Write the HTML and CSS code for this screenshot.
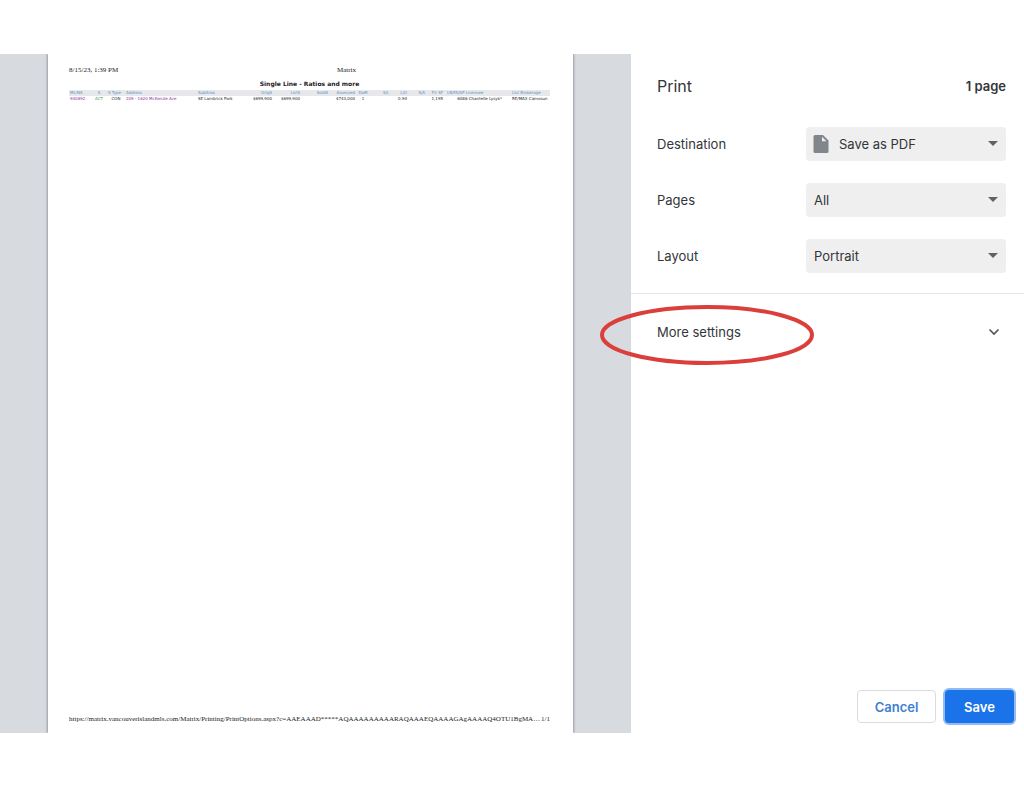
FILE: index.html
```html
<!DOCTYPE html>
<html lang="en">
<head>
    <meta charset="UTF-8">
    <meta name="viewport" content="width=device-width, initial-scale=1.0">
    <title>Print</title>
    <link rel="stylesheet" href="styles.css">
</head>
<body>

    <div class="dialog">
        <main class="preview">
            <article class="sheet">
                <header class="sheet-header">
                    <span>8/15/23, 1:39 PM</span>
                    <span class="sheet-title">Matrix</span>
                </header>

                <h2>Single Line - Ratios and more</h2>

                <table>
                    <colgroup>
                        <col class="col-ml">
                        <col class="col-s">
                        <col class="col-type">
                        <col class="col-address">
                        <col class="col-area">
                        <col class="col-price">
                        <col class="col-price">
                        <col class="col-price">
                        <col class="col-assessed">
                        <col class="col-dom">
                        <col class="col-ratio">
                        <col class="col-ratio">
                        <col class="col-ratio">
                        <col class="col-ratio">
                        <col class="col-licensee">
                        <col>
                    </colgroup>
                    <thead>
                        <tr>
                            <th>ML/NS</th>
                            <th class="mid">S</th>
                            <th>S Type</th>
                            <th>Address</th>
                            <th>SubArea</th>
                            <th class="num">OrigS</th>
                            <th class="num">ListS</th>
                            <th class="num">SoldS</th>
                            <th class="num">Assessed</th>
                            <th class="mid">DoM</th>
                            <th class="num">S/L</th>
                            <th class="num">L/O</th>
                            <th class="num">S/A</th>
                            <th class="num">Flr SF</th>
                            <th class="licensee">LB/FA/SP Licensee</th>
                            <th>List Brokerage</th>
                        </tr>
                    </thead>
                    <tbody>
                        <tr>
                            <td><a href="#">940892</a></td>
                            <td class="mid active">ACT</td>
                            <td class="mid">CON</td>
                            <td><a href="#">209 - 1620 McKenzie Ave</a></td>
                            <td>SE Lambrick Park</td>
                            <td class="num">$699,900</td>
                            <td class="num">$699,900</td>
                            <td></td>
                            <td class="num">$743,000</td>
                            <td class="mid">1</td>
                            <td></td>
                            <td class="num">0.94</td>
                            <td></td>
                            <td class="num">1,195</td>
                            <td class="licensee num">6086 Chantelle Lysyk*</td>
                            <td>RE/MAX Camosun</td>
                        </tr>
                    </tbody>
                </table>

                <footer class="sheet-footer">
                    <span>https://matrix.vancouverislandmls.com/Matrix/Printing/PrintOptions.aspx?c=AAEAAAD*****AQAAAAAAAAARAQAAAEQAAAAGAgAAAAQ4OTU1BgMA…</span>
                    <span>1/1</span>
                </footer>
            </article>
        </main>

        <form class="sidebar">
            <header class="sidebar-header">
                <h1>Print</h1>
                <span class="page-count">1 page</span>
            </header>

            <div class="settings">
                <div class="row">
                    <label for="destination">Destination</label>
                    <div class="field">
                        <svg class="file-icon" viewBox="0 0 16 18" aria-hidden="true">
                            <path fill="#80868b" d="M2 0h8l5.500 5.500v11q0 1.500-1.500 1.500h-12Q.5 18 .5 16.500V1.500Q.5 0 2 0z"/>
                            <path fill="#f0f1f3" d="M9 1.800V6.200h4.400z"/>
                        </svg>
                        <select id="destination" class="with-icon">
                            <option>Save as PDF</option>
                        </select>
                    </div>
                </div>
                <div class="row">
                    <label for="pages">Pages</label>
                    <div class="field">
                        <select id="pages">
                            <option>All</option>
                            <option>Custom</option>
                        </select>
                    </div>
                </div>
                <div class="row">
                    <label for="layout">Layout</label>
                    <div class="field">
                        <select id="layout">
                            <option>Portrait</option>
                            <option>Landscape</option>
                        </select>
                    </div>
                </div>
            </div>

            <button type="button" class="more">
                <span>More settings</span>
                <svg class="chevron" viewBox="0 0 12 8" aria-hidden="true">
                    <path fill="none" stroke="#505356" stroke-width="1.600" d="M1.500 1.500l4.500 4.500 4.500-4.500"/>
                </svg>
                <svg class="circle" viewBox="0 0 214 62" aria-hidden="true">
                    <ellipse cx="107" cy="31" rx="105" ry="28" fill="none" stroke="#db3f3c" stroke-width="4"/>
                </svg>
            </button>

            <div class="actions">
                <button type="button" class="cancel">Cancel</button>
                <button type="submit" class="save">Save</button>
            </div>
        </form>
    </div>

</body>
</html>
```
FILE: styles.css
```css
* {
    box-sizing: border-box;
}

body {
    margin: 0;
    font-family: Inter, Roboto, sans-serif;
    font-size: 13px;
    color: #333639;
    background-color: #fff;
}

.dialog {
    display: grid;
    grid-template-columns: 1fr 393px;
    min-height: 100vh;
    padding: 54px 0;
}

/* preview */
.preview {
    display: flex;
    padding: 0 58px 0 48px;
    background-color: #d7dadf;
}

.sheet {
    flex: 1;
    min-width: 0;
    display: flex;
    flex-direction: column;
    padding: 12px 23px 8px 21px;
    background-color: #fff;
    box-shadow: 1px 0 2px #9a9ea3, -1px 0 2px #9a9ea3;
    clip-path: inset(0 -4px);
    color: #222;
}

.sheet-header {
    display: grid;
    grid-template-columns: 268px 1fr;
    font: 7px/8px "Liberation Serif", serif;
}

.sheet h2 {
    margin: 6px 0 2px;
    font: bold 6px/8px "DejaVu Sans", sans-serif;
    text-align: center;
}

table {
    width: 100%;
    table-layout: fixed;
    border-collapse: collapse;
    font: 4px/6px "DejaVu Sans", sans-serif;
    white-space: nowrap;
}

th,
td {
    padding: 0 0 0 1px;
    text-align: left;
    font-weight: normal;
}

th {
    background-color: #e6e8eb;
    color: #5c8fc0;
}

td a {
    color: #8a2f9c;
    text-decoration: none;
}

.active {
    color: #4f9a4f;
}

.num {
    padding: 0;
    text-align: right;
}

.mid {
    padding: 0;
    text-align: center;
}

.licensee {
    padding: 0 9px 0 4px;
}

.col-ml {
    width: 22px;
}

.col-s {
    width: 16px;
}

.col-type {
    width: 18px;
}

.col-address {
    width: 72px;
}

.col-area {
    width: 47px;
}

.col-price {
    width: 28px;
}

.col-assessed {
    width: 27px;
}

.col-dom {
    width: 16px;
}

.col-ratio {
    width: 18px;
}

.col-licensee {
    width: 68px;
}

.sheet-footer {
    display: flex;
    justify-content: space-between;
    margin-top: auto;
    font: 7px/12px "Liberation Serif", serif;
}

/* settings */
.sidebar {
    display: flex;
    flex-direction: column;
}

.sidebar-header {
    display: flex;
    justify-content: space-between;
    align-items: center;
    padding: 20px 18px 29px 26px;
}

h1 {
    margin: 0;
    font-size: 16px;
    line-height: 24px;
    font-weight: 400;
}

.page-count {
    font-weight: 600;
}

.settings {
    display: grid;
    gap: 22px;
    padding: 0 18px 20px 26px;
    border-bottom: 1px solid #e4e6e8;
}

.row {
    display: flex;
    justify-content: space-between;
    align-items: center;
}

.field {
    position: relative;
    width: 200px;
}

.field::after {
    content: "";
    position: absolute;
    top: 14px;
    right: 8px;
    border: 5px solid transparent;
    border-top-color: #606366;
    border-bottom: 0;
    pointer-events: none;
}

.file-icon {
    position: absolute;
    top: 8px;
    left: 7px;
    width: 16px;
    height: 18px;
}

select {
    appearance: none;
    display: block;
    width: 100%;
    height: 34px;
    padding: 0 24px 0 8px;
    border: 0;
    border-radius: 4px;
    background-color: #efefef;
    color: #333639;
    font: 13px Inter, Roboto, sans-serif;
}

.with-icon {
    padding-left: 33px;
}

.more {
    position: relative;
    display: flex;
    justify-content: space-between;
    align-items: center;
    padding: 26px 24px 26px 26px;
    border: 0;
    background: none;
    color: inherit;
    font: 13px/24px Inter, Roboto, sans-serif;
    cursor: pointer;
}

.chevron {
    width: 12px;
    height: 8px;
}

/* red marker over "More settings" */
.circle {
    position: absolute;
    top: 10px;
    left: -31px;
    width: 214px;
    height: 62px;
}

.actions {
    display: flex;
    justify-content: flex-end;
    gap: 9px;
    margin-top: auto;
    padding: 0 10px 10px;
}

.actions button {
    height: 33px;
    border-radius: 4px;
    font: 600 13px Inter, Roboto, sans-serif;
    cursor: pointer;
}

.cancel {
    width: 79px;
    border: 1px solid #dadce0;
    background-color: #fff;
    color: #3f7fd0;
}

.save {
    width: 69px;
    border: 0;
    background-color: #1a73e8;
    color: #fff;
    box-shadow: 0 0 0 2px #8fbcf4;
}
```
